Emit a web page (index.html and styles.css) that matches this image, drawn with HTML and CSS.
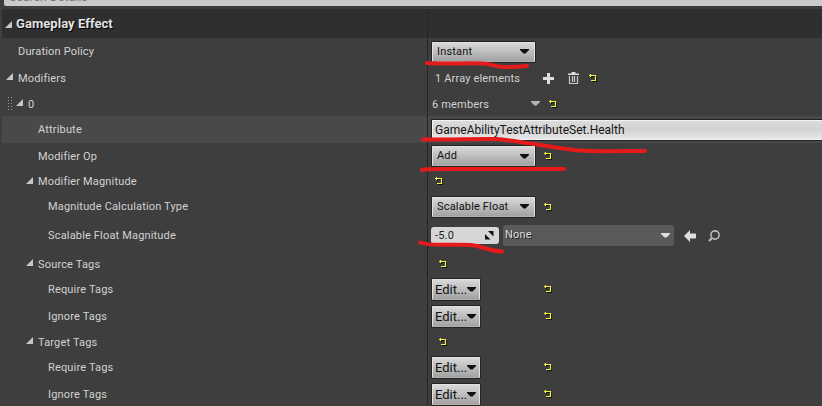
FILE: index.html
```html
<!DOCTYPE html>
<html lang="en">
<head>
<meta charset="utf-8">
<title>Gameplay Effect</title>
<link rel="stylesheet" href="styles.css">
</head>
<body>
<svg class="defs" width="0" height="0">
  <symbol id="undo" viewBox="0 0 10 10"><g fill="none" stroke-width="1"><path stroke="#111" d="M3 2.500h4M7.500 2v6M8 7.500H3M2.500 2v2"/><path stroke="#f0f046" stroke-width="1.200" d="M0 1.500h7M6.500 1v6M7 6.500H2M1.500 0v3"/></g></symbol>
  <symbol id="tri" viewBox="0 0 7 7"><path fill="#c8c8c8" d="M7 0v7H0z"/></symbol>
  <symbol id="down" viewBox="0 0 9 5"><path fill="currentColor" d="M0 0h9v1L5.500 4.500h-2L0 1z"/></symbol>
</svg>
<div class="search"><span>Search Details</span></div>
<main class="details">
  <header class="row head"><div class="name"><svg class="tri"><use href="#tri"/></svg><h1>Gameplay Effect</h1></div><div class="value"></div></header>
  <div class="row h27"><div class="name l0"><span>Duration Policy</span></div><div class="value"><div class="combo"><span>Instant</span><svg class="down"><use href="#down"/></svg></div></div></div>
  <div class="row h26"><div class="name l0"><svg class="tri"><use href="#tri"/></svg><span class="low">Modifiers</span></div><div class="value"><span class="count low">1 Array elements</span>
    <svg class="plus" viewBox="0 0 11 11"><path d="M4 0h3v4h4v3H7v4H4V7H0V4h4z" fill="#ddd"/></svg>
    <svg class="trash" viewBox="0 0 11 12"><path d="M0 1.500h3.500V0h4v1.500H11V3H0z" fill="#ddd"/><path d="M1.500 4v7.500h8V4M4.500 4v6M6.500 4v6" fill="none" stroke="#ccc" stroke-width="1.200"/></svg>
    <svg class="undo"><use href="#undo"/></svg></div></div>
  <div class="row h25"><div class="name l1"><svg class="grip" viewBox="0 0 4 13"><path d="M.5 0v13M3.500 0v13" stroke="#999" stroke-dasharray="1 2"/></svg><svg class="tri"><use href="#tri"/></svg><span class="low">0</span></div><div class="value"><span class="members low">6 members</span><svg class="down light"><use href="#down"/></svg><svg class="undo"><use href="#undo"/></svg></div></div>
  <div class="row h27 hover"><div class="name l2"><span>Attribute</span></div><div class="value"><div class="attribute">GameAbilityTestAttributeSet.Health</div></div></div>
  <div class="row h26"><div class="name l2"><span class="low">Modifier Op</span></div><div class="value"><div class="combo"><span>Add</span><svg class="down"><use href="#down"/></svg></div><svg class="undo"><use href="#undo"/></svg></div></div>
  <div class="row h25"><div class="name l2"><svg class="tri"><use href="#tri"/></svg>Modifier Magnitude</div><div class="value"><svg class="undo near"><use href="#undo"/></svg></div></div>
  <div class="row h25"><div class="name l3">Magnitude Calculation Type</div><div class="value"><div class="combo"><span>Scalable Float</span><svg class="down"><use href="#down"/></svg></div><svg class="undo"><use href="#undo"/></svg></div></div>
  <div class="row h33"><div class="name l3"><span>Scalable Float Magnitude</span></div><div class="value"><div class="number"><span>-5.0</span><svg viewBox="0 0 9 9"><path d="M3 0h5.500v5.500zM0 3v5.500h5.500z" fill="#111"/></svg></div><div class="curve"><span>None</span><svg class="down"><use href="#down"/></svg></div>
    <svg class="back" viewBox="0 0 12 12"><path d="M0 6l6-6v3.500h5q1 0 1 1v3q0 1-1 1H6V12z" fill="#ddd"/></svg>
    <svg class="find" viewBox="0 0 12 12"><circle cx="7" cy="5" r="4.100" fill="none" stroke="#bbb" stroke-width="1.600"/><path d="M4 8l-3 3" stroke="#bbb" stroke-width="2.200"/></svg></div></div>
  <div class="row h24"><div class="name l2"><svg class="tri"><use href="#tri"/></svg><span class="low">Source Tags</span></div><div class="value"><svg class="undo tag"><use href="#undo"/></svg></div></div>
  <div class="row h27"><div class="name l3"><span>Require Tags</span></div><div class="value"><div class="edit">Edit...<svg class="down"><use href="#down"/></svg></div><svg class="undo"><use href="#undo"/></svg></div></div>
  <div class="row h27"><div class="name l3"><span>Ignore Tags</span></div><div class="value"><div class="edit">Edit...<svg class="down"><use href="#down"/></svg></div><svg class="undo"><use href="#undo"/></svg></div></div>
  <div class="row h24"><div class="name l2"><svg class="tri"><use href="#tri"/></svg><span class="low">Target Tags</span></div><div class="value"><svg class="undo tag"><use href="#undo"/></svg></div></div>
  <div class="row h27"><div class="name l3"><span>Require Tags</span></div><div class="value"><div class="edit">Edit...<svg class="down"><use href="#down"/></svg></div><svg class="undo"><use href="#undo"/></svg></div></div>
  <div class="row h27"><div class="name l3"><span>Ignore Tags</span></div><div class="value"><div class="edit">Edit...<svg class="down"><use href="#down"/></svg></div><svg class="undo"><use href="#undo"/></svg></div></div>
</main>
<svg class="marks" viewBox="0 0 822 406"><path d="M427 63C445 64 465 63 483 63.500C493 64 495 67 505 67C514 67 521 66.500 527 66"/><path d="M423 139.500C447 140 475 138.500 496 139C520 141 548 147 574 150C593 152 621 151 645 151"/><path d="M422 169.800C432 168.500 445 169 460 169H564"/><path d="M420 242.500C432 247 455 243.500 471 245C483 246 487 251 502 251.500"/></svg>
</body>
</html>
```

FILE: styles.css
```css
* { box-sizing: border-box; }
body {
  margin: 0;
  width: 822px;
  height: 406px;
  overflow: hidden;
  background: #3e3e3e;
  color: #d2d2d2;
  font: 11px/16px Roboto, sans-serif;
  letter-spacing: 0.17px;
}
svg { display: block; flex: none; }
.defs { position: absolute; }
.search {
  height: 6px;
  margin: 0 0 3px 4px;
  padding-left: 5px;
  overflow: hidden;
  background: #cbcbcb;
  color: #777;
  font-size: 12px;
  border-radius: 0 0 0 2px;
}
.search span { display: block; margin-top: -11px; }
.details { margin-left: 2px; }
.row { display: grid; grid-template-columns: 426px 1fr; }
.name { display: flex; align-items: center; border-right: 1px solid #252525; }
.value { display: flex; align-items: center; padding-left: 4px; min-width: 0; }
.head { height: 29px; background: #2f2f2f; border-radius: 3px 0 0 0; }
.head .name { padding-left: 3px; }
.head .tri { margin: 2px 4px 0 0; }
h1 { margin: 0; font-size: 13px; font-weight: 700; letter-spacing: 0.05px; color: #e2e2e2; text-shadow: 1px 1px 0 #000; }
.h24 { height: 24px; }
.h25 { height: 25px; }
.h26 { height: 26px; }
.h27 { height: 27px; }
.h33 { height: 33px; }
.h27 .name, .h33 .name { padding-top: 1px; }
.low { margin-top: 2px; }
.hover { background: #494949; }
.l0 { padding-left: 16px; }
.l1 { padding-left: 26px; }
.l2 { padding-left: 36px; }
.l3 { padding-left: 46px; }
.tri { width: 7px; height: 7px; margin: -3px 5px 0 -12px; }
.l1 .tri { margin-left: 4px; }
.l1 .grip { margin-left: -20px; }
.grip { width: 4px; height: 13px; }
.undo { align-self: flex-start; width: 10px; height: 10px; margin: 9px 0 0 9px; }
.undo.near { margin: 8px 0 0 3px; }
.undo.tag { margin: 8px 0 0 7px; }
.down { width: 9px; height: 5px; }
.combo, .edit {
  display: flex;
  align-items: center;
  justify-content: space-between;
  width: 103px;
  height: 20px;
  padding: 0 5px 0 4px;
  border: 1px solid #e2e2e2;
  border-bottom-color: #b0b0b0;
  border-radius: 1px;
  background: linear-gradient(#d8d8d8, #a2a2a2);
  box-shadow: 0 0 0 1px #242424;
  color: #111;
}
.edit { width: 48px; height: 21px; padding: 0 4px 0 2px; font-size: 13px; letter-spacing: 0; }
.edit + .undo { margin-left: 64px; }
.count { width: 109px; padding-left: 3px; }
.plus { width: 11px; height: 11px; margin-left: 2px; }
.trash { width: 11px; height: 12px; margin-left: 14px; }
.trash + .undo { margin-left: 10px; }
.members { width: 99px; }
.light { color: #b5b5b5; }
.attribute {
  flex: 1;
  height: 20px;
  padding-left: 2px;
  border: 1px solid #f2f2f2;
  border-right: 0;
  background: linear-gradient(#dcdcdc, #d2d2d2 45%, #e6e6e6);
  box-shadow: 0 0 0 1px #222;
  color: #151515;
  font-size: 12px;
  letter-spacing: 0.01px;
  line-height: 19px;
}
.number {
  display: flex;
  align-items: center;
  justify-content: space-between;
  width: 68px;
  height: 17px;
  margin: 0 4px 0 -1px;
  padding: 0 5px 0 4px;
  border-radius: 3px;
  background: #d6d6d6;
  color: #222;
}
.number svg { width: 9px; height: 9px; }
.curve {
  display: flex;
  align-items: center;
  justify-content: space-between;
  width: 171px;
  height: 21px;
  padding: 0 4px 0 2px;
  border-radius: 3px;
  background: #5a5a5a;
  color: #ddd;
  text-shadow: 1px 1px 0 #222;
}
.curve span { margin-top: -2px; }
.back { width: 12px; height: 12px; margin-left: 10px; }
.find { width: 12px; height: 12px; margin-left: 12px; }
.marks {
  position: absolute;
  inset: 0;
  width: 822px;
  height: 406px;
  fill: none;
  stroke: #e51b1b;
  stroke-width: 4;
  stroke-linecap: round;
}
```
